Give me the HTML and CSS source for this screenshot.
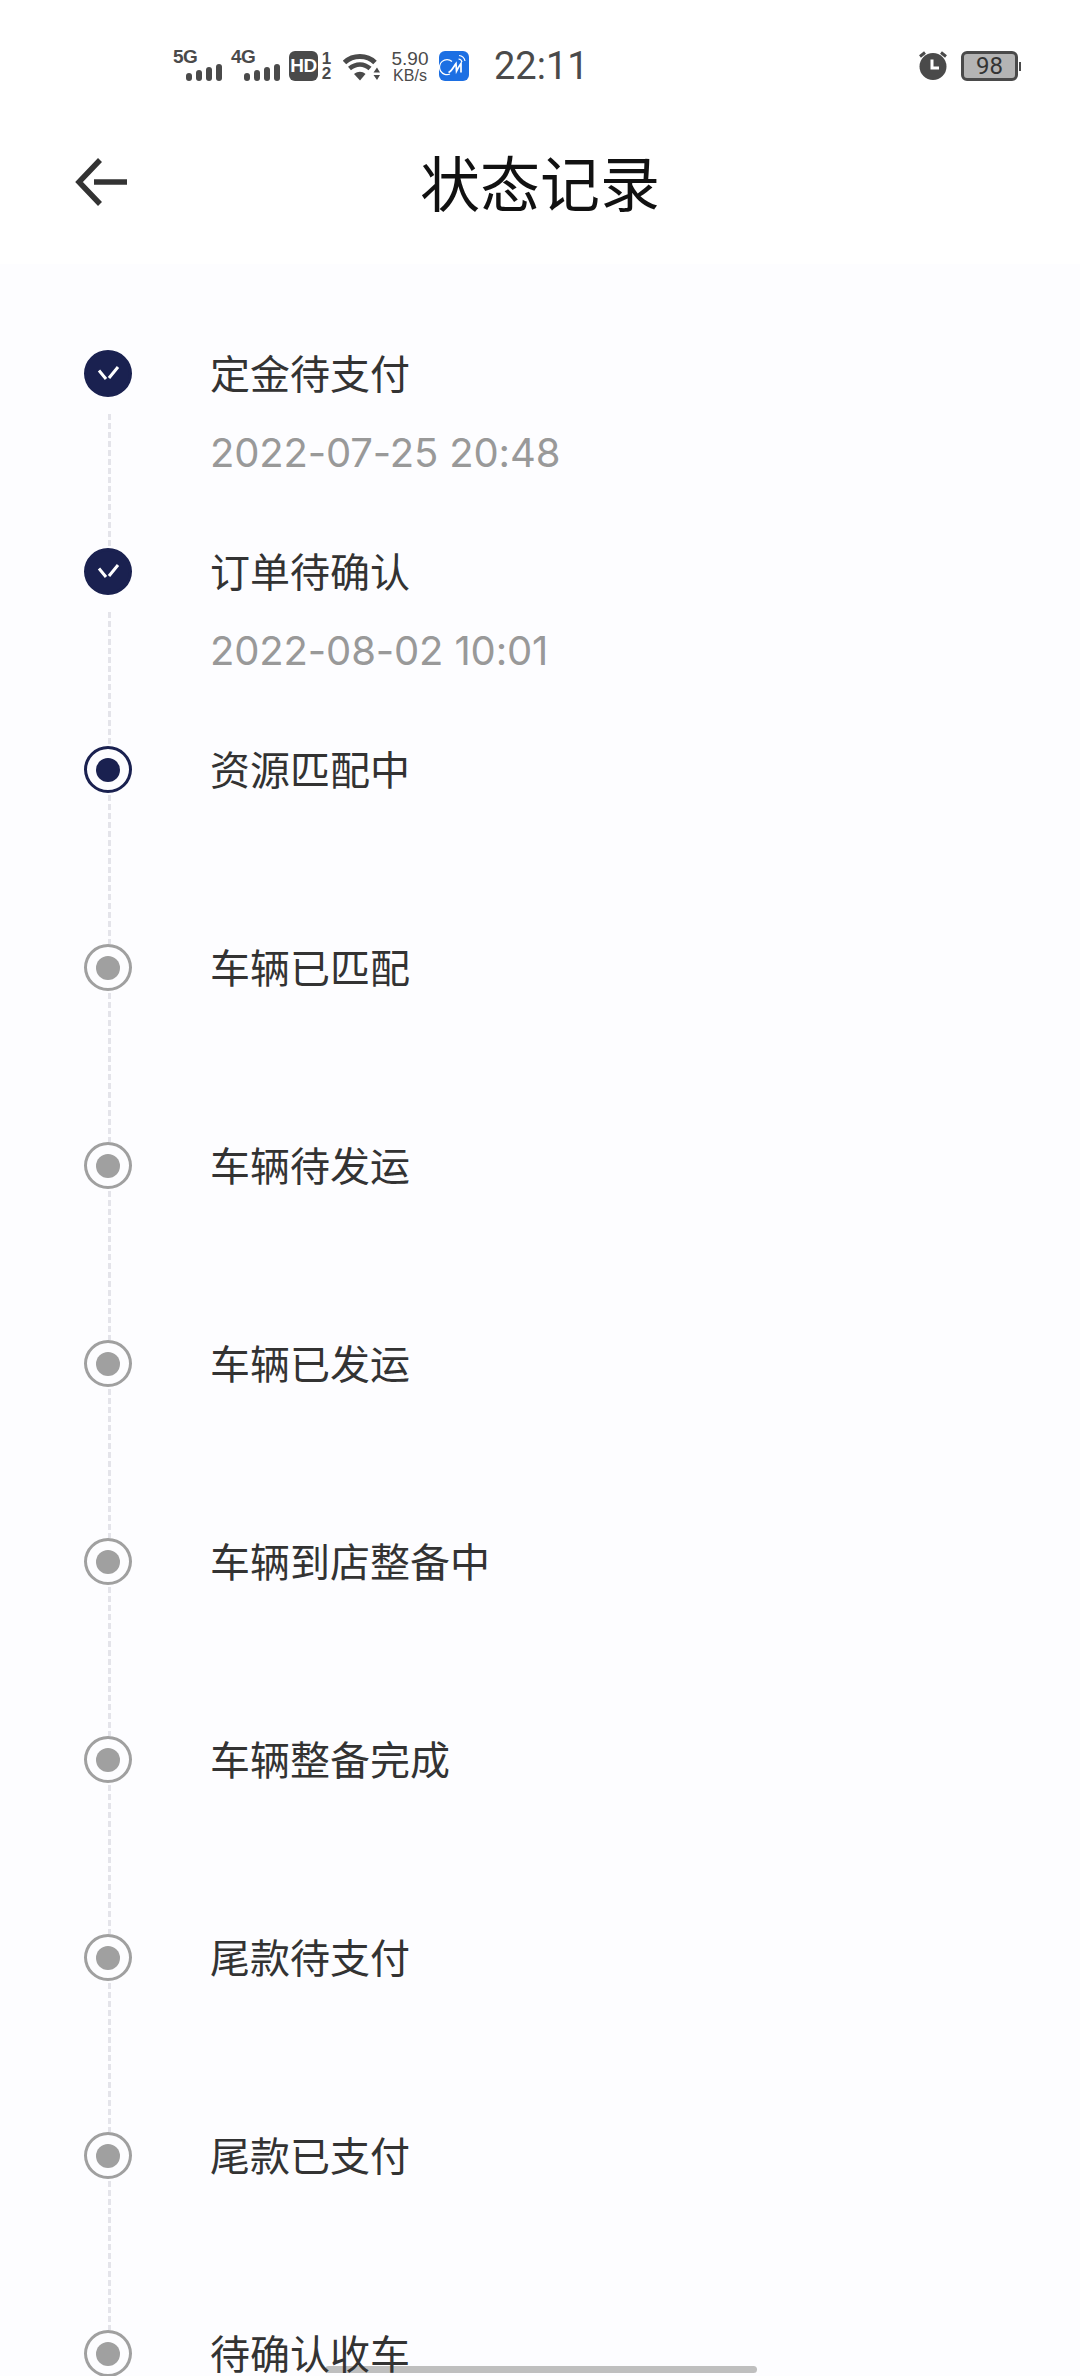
FILE: index.html
```html
<!DOCTYPE html>
<html lang="zh">
<head>
<meta charset="utf-8">
<title>状态记录</title>
<link rel="stylesheet" href="styles.css">
</head>
<body>
<div class="page">
  <header class="top">
    <div class="status">
      <div class="net">
        <span class="net-label">5G</span>
        <svg class="bars" width="36" height="17" viewBox="0 0 36 17"><rect x="0" y="9" width="6" height="8" rx="3"/><rect x="10" y="6" width="6" height="11" rx="3"/><rect x="20" y="3" width="6" height="14" rx="3"/><rect x="30" y="0" width="6" height="17" rx="3"/></svg>
      </div>
      <div class="net net-second">
        <span class="net-label">4G</span>
        <svg class="bars" width="36" height="17" viewBox="0 0 36 17"><rect x="0" y="9" width="6" height="8" rx="3"/><rect x="10" y="6" width="6" height="11" rx="3"/><rect x="20" y="3" width="6" height="14" rx="3"/><rect x="30" y="0" width="6" height="17" rx="3"/></svg>
      </div>
      <div class="hd"><span class="hd-box">HD</span><span class="hd-sims"><span>1</span><span>2</span></span></div>
      <svg class="wifi" width="37" height="28" viewBox="0 0 37 28">
        <path d="M1.500 9.500C10 1.500 24 1.500 32 9.500" fill="none" stroke="#4a4a4a" stroke-width="5"/>
        <path d="M6.500 15.500C13 10 21 10 27 15.500" fill="none" stroke="#4a4a4a" stroke-width="4.500"/>
        <path d="M11 21C15 18 19 18 22.500 21L17 27.500Z" fill="#4a4a4a"/>
        <path d="M30.500 19.500L34 14.500L37 19.500ZM30.500 22L37 22L34 27Z" fill="#4a4a4a"/>
      </svg>
      <div class="speed"><span class="speed-num">5.90</span><span class="speed-unit">KB/s</span></div>
      <svg class="app" width="30" height="30" viewBox="0 0 30 30">
        <rect width="30" height="30" rx="6" fill="#1c6fe3"/>
        <path d="M13 10.500A7.500 7.500 0 1 0 11 23" fill="none" stroke="#fff" stroke-width="1.300"/>
        <path d="M20 4.500A7 7 0 0 1 26 10M19.500 8A4 4 0 0 1 23 11" fill="none" stroke="#fff" stroke-width="1.200"/>
        <path d="M9.500 21.500C13 20 15 15 17 12.500L17.500 20C19 17 20.500 14.500 22 12.500L22 21.500" fill="none" stroke="#fff" stroke-width="1.700"/>
      </svg>
      <span class="clock">22:11</span>
      <svg class="alarm" width="30" height="30" viewBox="0 0 30 30">
        <circle cx="15" cy="16.500" r="13.500" fill="#4a4a4a"/>
        <path d="M2 6.500L7 2.500M23 2.500L28 6.500" stroke="#4a4a4a" stroke-width="3"/>
        <path d="M14 9.500V18H21" fill="none" stroke="#fff" stroke-width="3"/>
      </svg>
      <div class="battery"><span class="battery-body">98</span><span class="battery-nub"></span></div>
    </div>
    <div class="nav">
      <svg class="back" width="54" height="50" viewBox="0 0 54 50">
        <path d="M26 3L5 25L26 47" fill="none" stroke="#333" stroke-width="5.500"/>
        <path d="M20 25H53" fill="none" stroke="#333" stroke-width="5.500"/>
      </svg>
      <h1 class="title">状态记录</h1>
    </div>
  </header>
  <main class="timeline">
    <div class="step step-done">
      <span class="dot dot-done"><svg width="24" height="18" viewBox="0 0 24 18"><path d="M3 5.500L10 14M13 13L22 2" fill="none" stroke="#fff" stroke-width="3"/></svg></span>
      <div class="step-text"><p class="step-name">定金待支付</p><p class="step-time">2022-07-25 20:48</p></div>
    </div>
    <div class="step step-done">
      <span class="dot dot-done"><svg width="24" height="18" viewBox="0 0 24 18"><path d="M3 5.500L10 14M13 13L22 2" fill="none" stroke="#fff" stroke-width="3"/></svg></span>
      <div class="step-text"><p class="step-name">订单待确认</p><p class="step-time">2022-08-02 10:01</p></div>
    </div>
    <div class="step">
      <span class="dot dot-active"><span class="core"></span></span>
      <div class="step-text"><p class="step-name">资源匹配中</p></div>
    </div>
    <div class="step">
      <span class="dot"><span class="core"></span></span>
      <div class="step-text"><p class="step-name">车辆已匹配</p></div>
    </div>
    <div class="step">
      <span class="dot"><span class="core"></span></span>
      <div class="step-text"><p class="step-name">车辆待发运</p></div>
    </div>
    <div class="step">
      <span class="dot"><span class="core"></span></span>
      <div class="step-text"><p class="step-name">车辆已发运</p></div>
    </div>
    <div class="step">
      <span class="dot"><span class="core"></span></span>
      <div class="step-text"><p class="step-name">车辆到店整备中</p></div>
    </div>
    <div class="step">
      <span class="dot"><span class="core"></span></span>
      <div class="step-text"><p class="step-name">车辆整备完成</p></div>
    </div>
    <div class="step">
      <span class="dot"><span class="core"></span></span>
      <div class="step-text"><p class="step-name">尾款待支付</p></div>
    </div>
    <div class="step">
      <span class="dot"><span class="core"></span></span>
      <div class="step-text"><p class="step-name">尾款已支付</p></div>
    </div>
    <div class="step step-last">
      <span class="dot"><span class="core"></span></span>
      <div class="step-text"><p class="step-name">待确认收车</p></div>
    </div>
  </main>
  <div class="home-bar"></div>
</div>
</body>
</html>
```
FILE: styles.css
```css
* { box-sizing: border-box; }
html, body { margin: 0; height: 2376px; overflow: hidden; }
body {
  background: #fdfdff;
  font-family: "Noto Sans CJK SC", "Noto Sans", sans-serif;
}
.page { position: relative; height: 2376px; overflow: hidden; }

.top { height: 264px; background: #fff; }

.status {
  height: 130px;
  padding: 49px 0 0 173px;
  display: flex;
  align-items: flex-start;
  color: #4a4a4a;
  font-family: "Liberation Sans", Arial, sans-serif;
}
.net { width: 48px; display: flex; flex-direction: column; }
.net-second { margin-left: 10px; }
.net-label { font-size: 19px; font-weight: 700; line-height: 15px; letter-spacing: -0.5px; }
.bars { margin: 0 0 0 13px; fill: #4a4a4a; }

.hd { margin: 2px 0 0 10px; display: flex; align-items: center; }
.hd-box {
  width: 29px; height: 30px;
  background: #4a4a4a; border-radius: 6px;
  color: #fff; font-size: 19px; font-weight: 700; line-height: 30px; text-align: center;
  letter-spacing: -0.5px;
}
.hd-sims { margin-left: 3px; width: 11px; display: flex; flex-direction: column; font-size: 17px; font-weight: 700; line-height: 15px; text-align: center; }

.wifi { margin: 4px 0 0 11px; }
.speed { margin: 1px 0 0 11px; width: 38px; display: flex; flex-direction: column; align-items: center; }
.speed-num { font-size: 19px; line-height: 18px; }
.speed-unit { font-size: 16px; line-height: 15px; }
.app { margin: 2px 0 0 10px; }
.clock {
  margin: -2px 0 0 25px; width: 87px;
  font-family: Roboto, sans-serif; font-size: 38px; line-height: 38px;
}
.alarm { margin: 1px 0 0 337px; }
.battery { margin: 2px 0 0 13px; display: flex; align-items: center; }
.battery-body {
  width: 57px; height: 30px;
  border: 3px solid #4a4a4a; border-radius: 6px;
  background: #b4b4b4;
  font-family: Roboto, sans-serif;
  font-size: 24px; line-height: 24px; text-align: center; color: #333;
}
.battery-nub { margin-left: 1px; width: 2px; height: 9px; background: #4a4a4a; }

.nav { position: relative; height: 134px; display: flex; justify-content: center; }
.back { position: absolute; left: 74px; top: 27px; }
.title { margin: 9px 0 0; font-size: 60px; font-weight: 400; line-height: 84px; color: #111; }

.timeline { padding: 86px 0 0 84px; }
.step { position: relative; height: 198px; display: flex; align-items: flex-start; }
.step::before {
  content: "";
  position: absolute;
  left: 24px; top: 49px; bottom: 0;
  width: 3px;
  background: repeating-linear-gradient(to bottom, #e4e4ea 0 6px, transparent 6px 9px);
}
.step-done::before { top: 64px; }
.dot {
  flex: none;
  width: 48px; height: 47px;
  border: 3px solid #a0a0a0;
  border-radius: 50%;
  display: flex; align-items: center; justify-content: center;
}
.core { width: 24px; height: 24px; border-radius: 50%; background: #a0a0a0; }
.dot-active { border-color: #1a2150; }
.dot-active .core { background: #1a2150; }
.dot-done { border-color: #1a2150; background: #1a2150; }

.step-text { margin-left: 78px; }
.step-name { margin: 0; font-size: 40px; line-height: 44px; color: #333; }
.step-time { margin: 35px 0 0; font-family: Inter, sans-serif; font-size: 40px; line-height: 48px; letter-spacing: -0.15px; color: #999; }

.home-bar {
  position: absolute;
  left: 325px; top: 2366px;
  width: 432px; height: 7px;
  border-radius: 4px;
  background: #bfbfbf;
  z-index: -1;
}
```
